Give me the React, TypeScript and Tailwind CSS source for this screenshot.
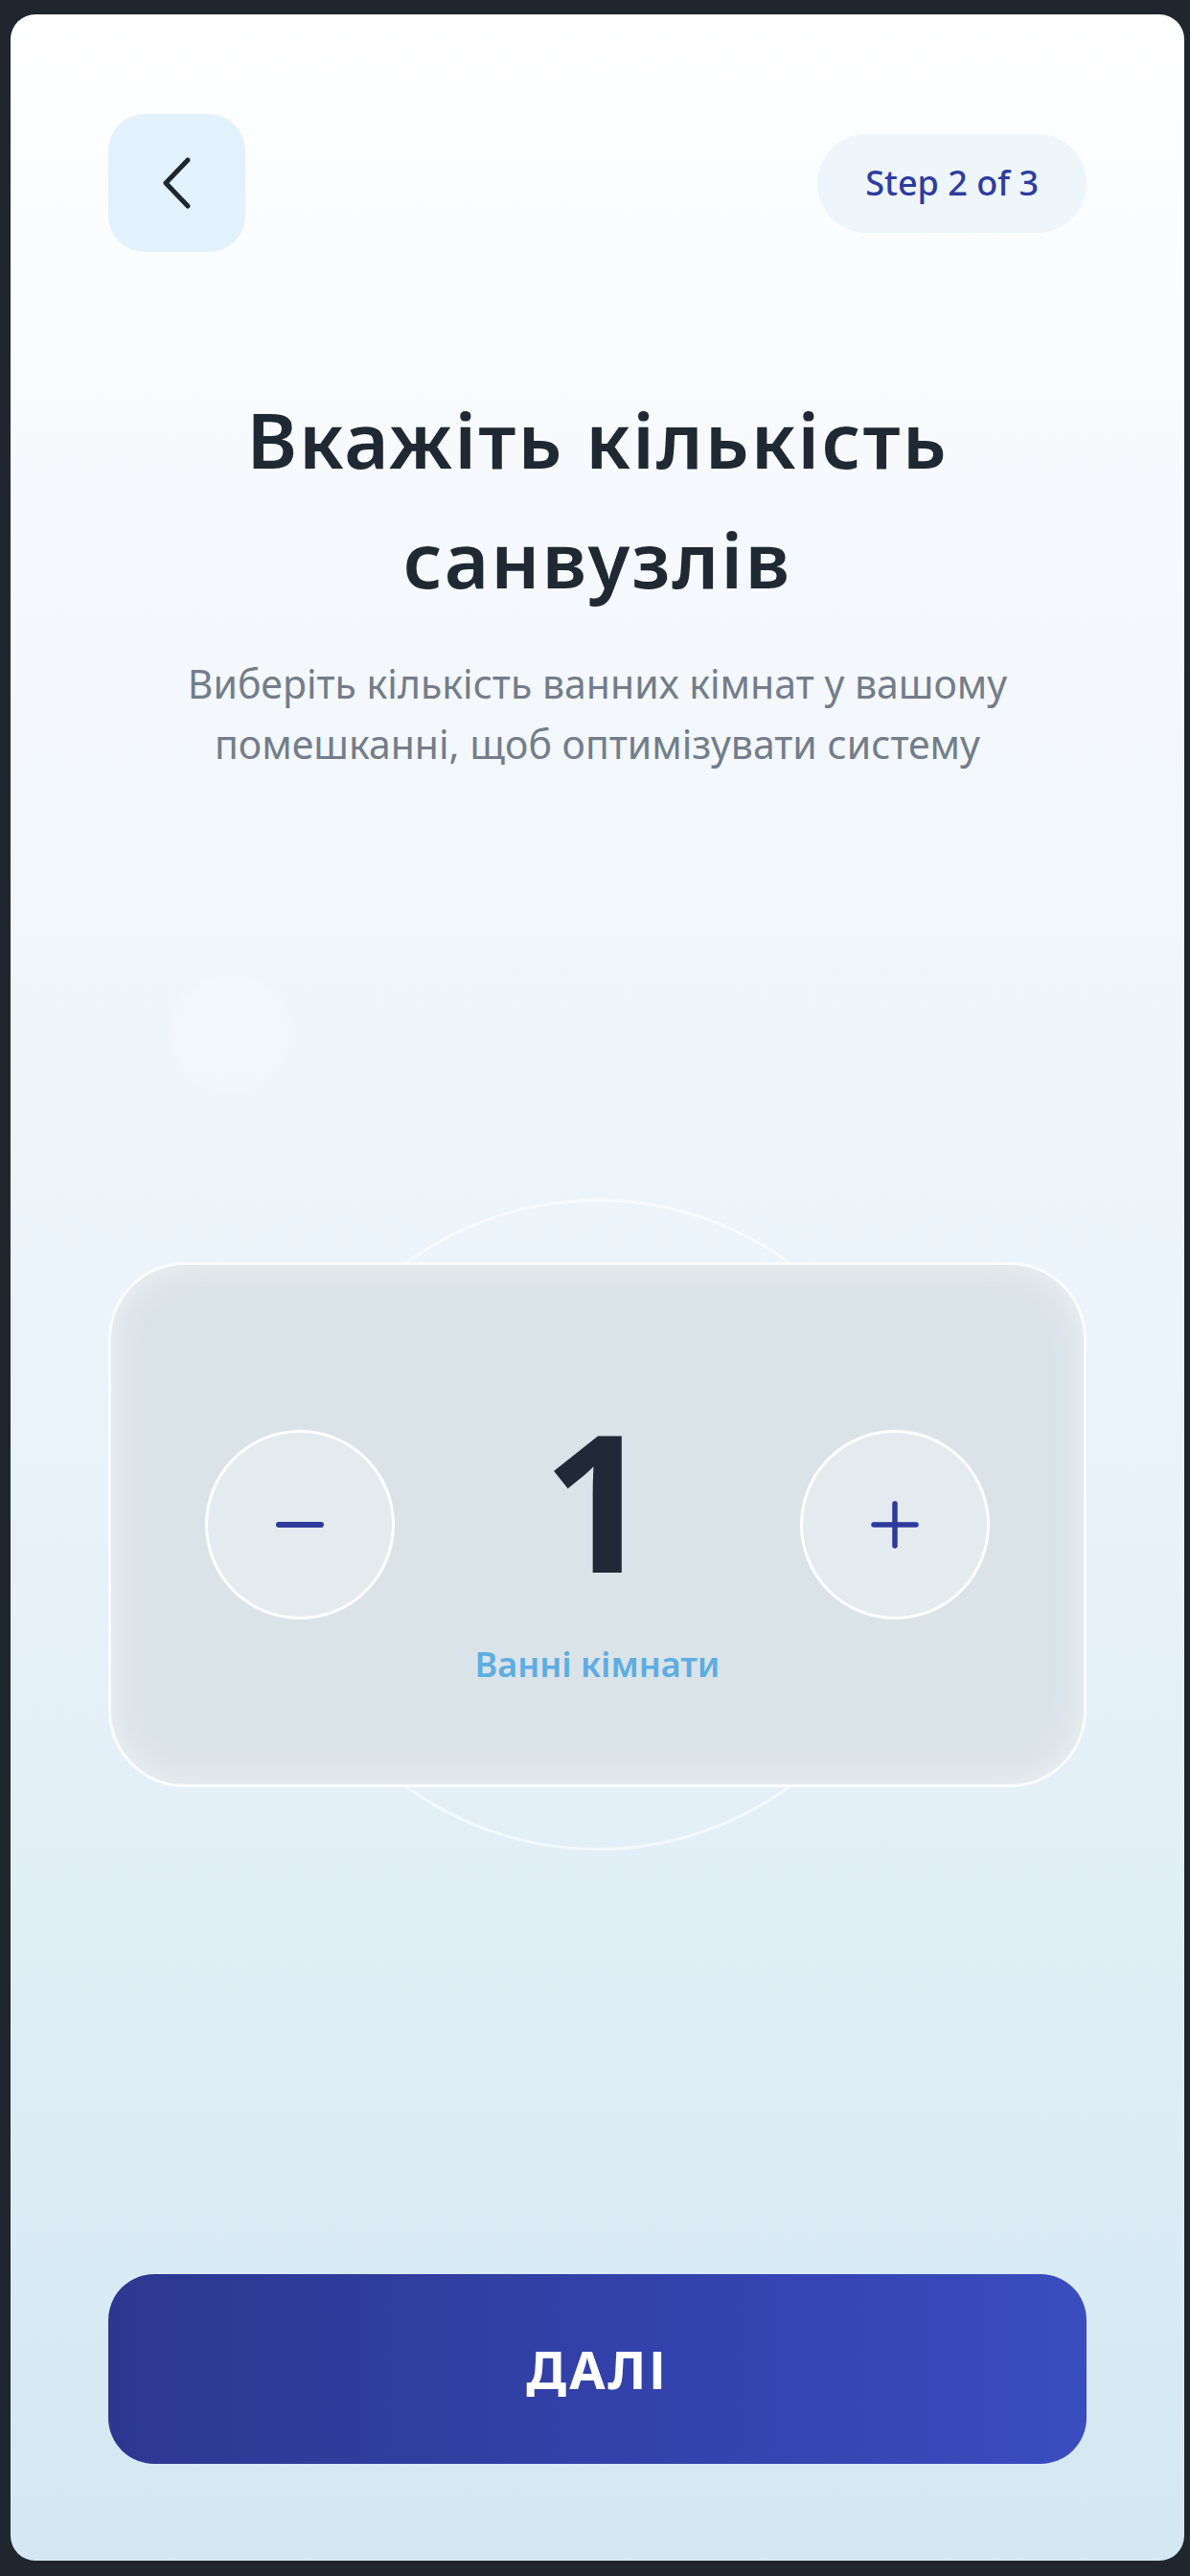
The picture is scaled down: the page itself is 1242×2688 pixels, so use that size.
import React from "react";

export default function App() {
  return (
    <div
      className="w-full h-[2688px] bg-[#1f262d] pt-[15px] pl-[11px] pr-[6px] pb-[16px]"
      style={{ fontFamily: '"Noto Sans", "Open Sans", sans-serif' }}
    >
      <div className="relative flex flex-col h-full rounded-[26px] overflow-hidden bg-[linear-gradient(180deg,#ffffff_0%,#f6f9fd_20%,#edf5fb_45%,#e3f0f7_70%,#d3e8f2_100%)] px-[102px] pt-[104px] pb-[101px]">
        {/* faint bubble */}
        <div className="absolute left-[165px] top-[1000px] w-[130px] h-[130px] rounded-full bg-white/15 blur-[6px]" />

        {/* header */}
        <div className="flex items-center justify-between h-[144px]">
          <button className="w-[143px] h-[144px] rounded-[38px] bg-[#e1f2fd] flex items-center justify-center">
            <svg width="32" height="54" viewBox="0 0 32 54" fill="none">
              <polyline
                points="27,3 4,27 27,51"
                stroke="#1f2630"
                strokeWidth="5"
                strokeLinecap="round"
                strokeLinejoin="round"
              />
            </svg>
          </button>
          <div className="h-[103px] px-[50px] rounded-full bg-[#eef6fc] flex items-center">
            <span className="text-[36px] font-medium text-[#2e3c9f] leading-none">Step 2 of 3</span>
          </div>
        </div>

        {/* title */}
        <h1 className="mt-[132px] text-center text-[80px] leading-[125px] font-semibold tracking-[2px] text-[#1f2933]">
          Вкажіть кількість санвузлів
        </h1>
        <p className="mt-[37px] text-center text-[41px] leading-[63px] text-[#737d8b]">
          Виберіть кількість ванних кімнат у вашому помешканні, щоб оптимізувати систему
        </p>

        {/* middle */}
        <div className="relative flex-1 flex items-center justify-center">
          <div className="absolute left-1/2 top-1/2 -translate-x-1/2 -translate-y-1/2 w-[680px] h-[680px] rounded-full border-[3px] border-white/60" />
          <div className="relative w-full h-[548px] rounded-[80px] border-[3px] border-white/90 bg-[#dae3e8] shadow-[inset_0_0_40px_rgba(255,255,255,0.55)] px-[98px] flex items-center justify-between">
            <button className="w-[198px] h-[198px] rounded-full border-[3px] border-white bg-[#e4ebef] flex items-center justify-center">
              <svg width="56" height="56" viewBox="0 0 56 56" fill="none">
                <line x1="6" y1="28" x2="50" y2="28" stroke="#2d3a9e" strokeWidth="6" strokeLinecap="round" />
              </svg>
            </button>
            <div className="flex flex-col items-center pt-[41px]">
              <span className="text-[200px] leading-[195px] font-bold text-[#1f2937]">1</span>
              <span className="mt-[56px] text-[36px] leading-[39px] font-semibold text-[#5dade2]">Ванні кімнати</span>
            </div>
            <button className="w-[198px] h-[198px] rounded-full border-[3px] border-white bg-[#e4ebef] flex items-center justify-center">
              <svg width="56" height="56" viewBox="0 0 56 56" fill="none">
                <line x1="6" y1="28" x2="50" y2="28" stroke="#2d3a9e" strokeWidth="5.5" strokeLinecap="round" />
                <line x1="28" y1="6" x2="28" y2="50" stroke="#2d3a9e" strokeWidth="5.5" strokeLinecap="round" />
              </svg>
            </button>
          </div>
        </div>

        {/* button */}
        <button className="w-full h-[198px] rounded-[48px] bg-[linear-gradient(90deg,#2c3890_0%,#3343ad_60%,#3a4dbf_100%)] flex items-center justify-center">
          <span className="text-[54px] font-bold text-white tracking-[3px] leading-none">ДАЛІ</span>
        </button>
      </div>
    </div>
  );
}
